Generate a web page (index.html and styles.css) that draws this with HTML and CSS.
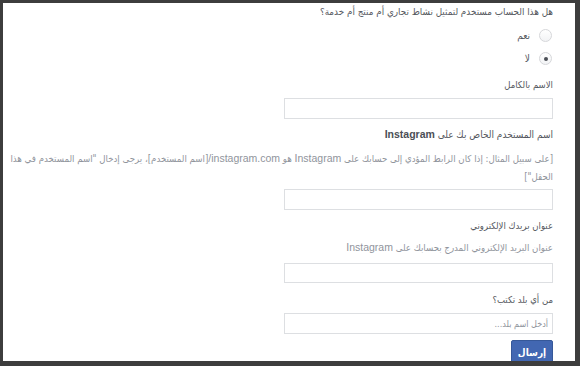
FILE: index.html
```html
<!DOCTYPE html>
<html lang="ar" dir="rtl">
<head>
<meta charset="utf-8">
<title>نموذج</title>
<link rel="stylesheet" href="styles.css">
</head>
<body>
<div class="frame">
  <form class="form">
    <div class="question">هل هذا الحساب مستخدم لتمثيل نشاط تجاري أم منتج أم خدمة؟</div>
    <div class="radios">
      <label class="radio-row"><span class="radio"></span><span class="radio-text">نعم</span></label>
      <label class="radio-row"><span class="radio checked"></span><span class="radio-text">لا</span></label>
    </div>
    <div class="label l1">الاسم بالكامل</div>
    <div class="input i1"></div>
    <div class="label l2">اسم المستخدم الخاص بك على <b class="latin">Instagram</b></div>
    <div class="help h2">[على سبيل المثال: إذا كان الرابط المؤدي إلى حسابك على <span class="latin">Instagram</span> هو <span class="latin">instagram.com/</span>[اسم المستخدم]، يرجى إدخال "اسم المستخدم في هذا الحقل"]</div>
    <div class="input i2"></div>
    <div class="label l3">عنوان بريدك الإلكتروني</div>
    <div class="help h3">عنوان البريد الإلكتروني المدرج بحسابك على <span class="latin">Instagram</span></div>
    <div class="input i3"></div>
    <div class="label l4">من أي بلد تكتب؟</div>
    <div class="input i4"><span class="placeholder">أدخل اسم بلد...</span></div>
    <button type="button" class="submit">إرسال</button>
  </form>
</div>
</body>
</html>
```

FILE: styles.css
```css
html, body {
  margin: 0;
  padding: 0;
  height: 100%;
}
body {
  background: #3d3d3d;
  padding: 3px 5px 5px 3px;
  box-sizing: border-box;
  font-family: "DejaVu Sans Condensed", "DejaVu Sans", sans-serif;
}
.frame {
  background: #ffffff;
  height: 358px;
  overflow: hidden;
}
.form {
  direction: rtl;
  padding: 0 22px 0 3px;
  font-size: 9.5px;
  color: #55585e;
}
.latin {
  font-family: "Liberation Sans", Arial, sans-serif;
}
.question {
  line-height: 18px;
  font-size: 9.8px;
}
.radios {
  margin-top: 3px;
}
.radio-row {
  display: flex;
  align-items: center;
  height: 23px;
  gap: 9px;
  padding-right: 1px;
}
.radio {
  width: 11px;
  height: 11px;
  border: 1px solid #d6d7da;
  border-radius: 50%;
  background: linear-gradient(#ffffff, #f2f3f5);
  display: flex;
  align-items: center;
  justify-content: center;
}
.radio.checked::after {
  content: "";
  width: 4px;
  height: 4px;
  border-radius: 50%;
  background: #4b4f56;
}
.radio-text {
  line-height: 18px;
  font-size: 10px;
}
.label {
  line-height: 18px;
}
.l2 {
  font-size: 10px;
}
.label b {
  font-weight: 700;
  font-size: 10.5px;
  color: #4b4f56;
}
.help {
  line-height: 18px;
  color: #90949c;
  font-size: 9.6px;
}
.help .latin {
  font-size: 10.5px;
}
.input {
  width: 269px;
  height: 21px;
  box-sizing: border-box;
  border: 1px solid #dddfe2;
  background: #fff;
  display: flex;
  align-items: center;
  padding: 0 4px;
}
.placeholder {
  color: #90949c;
  font-size: 9px;
}
.l1 { margin-top: 6px; }
.i1 { margin-top: 4px; }
.l2 { margin-top: 6px; }
.h2 { margin-top: 5px; }
.i2 { margin-top: 3px; }
.l3 { margin-top: 7px; }
.h3 { margin-top: 3px; }
.i3 { margin-top: 6px; height: 20px; }
.l4 { margin-top: 8px; }
.i4 { margin-top: 4px; }
.submit {
  display: block;
  margin-top: 6px;
  width: 42px;
  height: 24px;
  background: #4267b2;
  border: 1px solid #365899;
  border-radius: 2px;
  color: #fff;
  font-family: "DejaVu Sans Condensed", "DejaVu Sans", sans-serif;
  font-weight: 700;
  font-size: 10px;
  padding: 0;
}
```
